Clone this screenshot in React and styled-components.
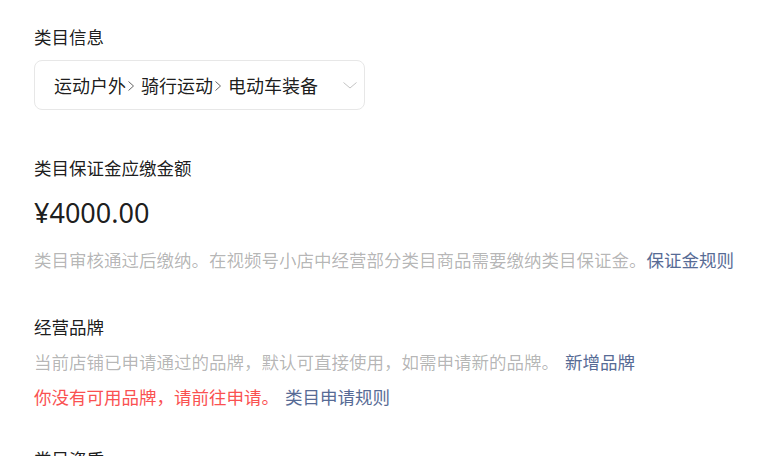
import React from "react";
import styled, { createGlobalStyle } from "styled-components";

const GlobalStyle = createGlobalStyle`
  html, body {
    margin: 0;
    padding: 0;
    background: #fff;
  }
  body {
    font-family: "Noto Sans CJK SC", "Noto Sans", sans-serif;
    color: rgba(0, 0, 0, 0.9);
    -webkit-font-smoothing: antialiased;
  }
`;

const Page = styled.div`
  padding: 24px 34px 0;
  height: 456px;
  overflow: hidden;
  box-sizing: border-box;
`;

const Section = styled.section`
  display: flex;
  flex-direction: column;
  margin-bottom: ${(p) => p.$space || 0}px;
`;

const Title = styled.div`
  font-size: 17.5px;
  line-height: 26px;
  color: rgba(0, 0, 0, 0.9);
`;

const Select = styled.div`
  margin-top: 10px;
  width: 331px;
  height: 50px;
  box-sizing: border-box;
  border: 1px solid #e7e7e7;
  border-radius: 8px;
  display: flex;
  align-items: center;
  justify-content: space-between;
  padding: 0 6px 0 19px;
  font-size: 18px;
  color: rgba(0, 0, 0, 0.9);
`;

const Crumbs = styled.div`
  display: flex;
  align-items: center;
  white-space: nowrap;
`;

const Sep = styled.svg`
  width: 8px;
  height: 12px;
  margin: 1px 6px 0 1px;
  flex: none;
`;

const Arrow = styled.svg`
  width: 16px;
  height: 16px;
  flex: none;
`;

const Amount = styled.div`
  margin-top: 15px;
  font-family: "Noto Sans", "Noto Sans CJK SC", sans-serif;
  font-size: 27px;
  line-height: 34px;
  color: rgba(0, 0, 0, 0.9);
`;

const Line = styled.div`
  margin-top: ${(p) => p.$top || 0}px;
  font-size: 17.5px;
  line-height: 26px;
  white-space: nowrap;
  color: ${(p) => (p.$tone === "error" ? "#fa5151" : "rgba(0, 0, 0, 0.3)")};
`;

const Link = styled.a`
  color: #576b95;
  text-decoration: none;
  margin-left: ${(p) => p.$gap || 0}px;
  cursor: pointer;
`;

function Separator() {
  return (
    <Sep viewBox="0 0 8 12" fill="none">
      <path d="M1.5 1.5 L6.5 6 L1.5 10.5" stroke="#666" strokeWidth="1" />
    </Sep>
  );
}

function Chevron() {
  return (
    <Arrow viewBox="0 0 16 16" fill="none">
      <path d="M1.5 5.5 L8 11 L14.5 5.5" stroke="#c4c4c4" strokeWidth="1" />
    </Arrow>
  );
}

const path = ["运动户外", "骑行运动", "电动车装备"];

export default function App() {
  return (
    <>
      <GlobalStyle />
      <Page>
        <Section $space={45}>
          <Title>类目信息</Title>
          <Select>
            <Crumbs>
              {path.map((name, i) => (
                <React.Fragment key={name}>
                  <span>{name}</span>
                  {i < path.length - 1 && <Separator />}
                </React.Fragment>
              ))}
            </Crumbs>
            <Chevron />
          </Select>
        </Section>

        <Section $space={41}>
          <Title>类目保证金应缴金额</Title>
          <Amount>¥4000.00</Amount>
          <Line $top={17}>
            类目审核通过后缴纳。在视频号小店中经营部分类目商品需要缴纳类目保证金。
            <Link>保证金规则</Link>
          </Line>
        </Section>

        <Section $space={36}>
          <Title>经营品牌</Title>
          <Line $top={9}>
            当前店铺已申请通过的品牌，默认可直接使用，如需申请新的品牌。
            <Link $gap={6}>新增品牌</Link>
          </Line>
          <Line $top={9} $tone="error">
            你没有可用品牌，请前往申请。
            <Link $gap={6}>类目申请规则</Link>
          </Line>
        </Section>

        <Section>
          <Title>类目资质</Title>
        </Section>
      </Page>
    </>
  );
}
